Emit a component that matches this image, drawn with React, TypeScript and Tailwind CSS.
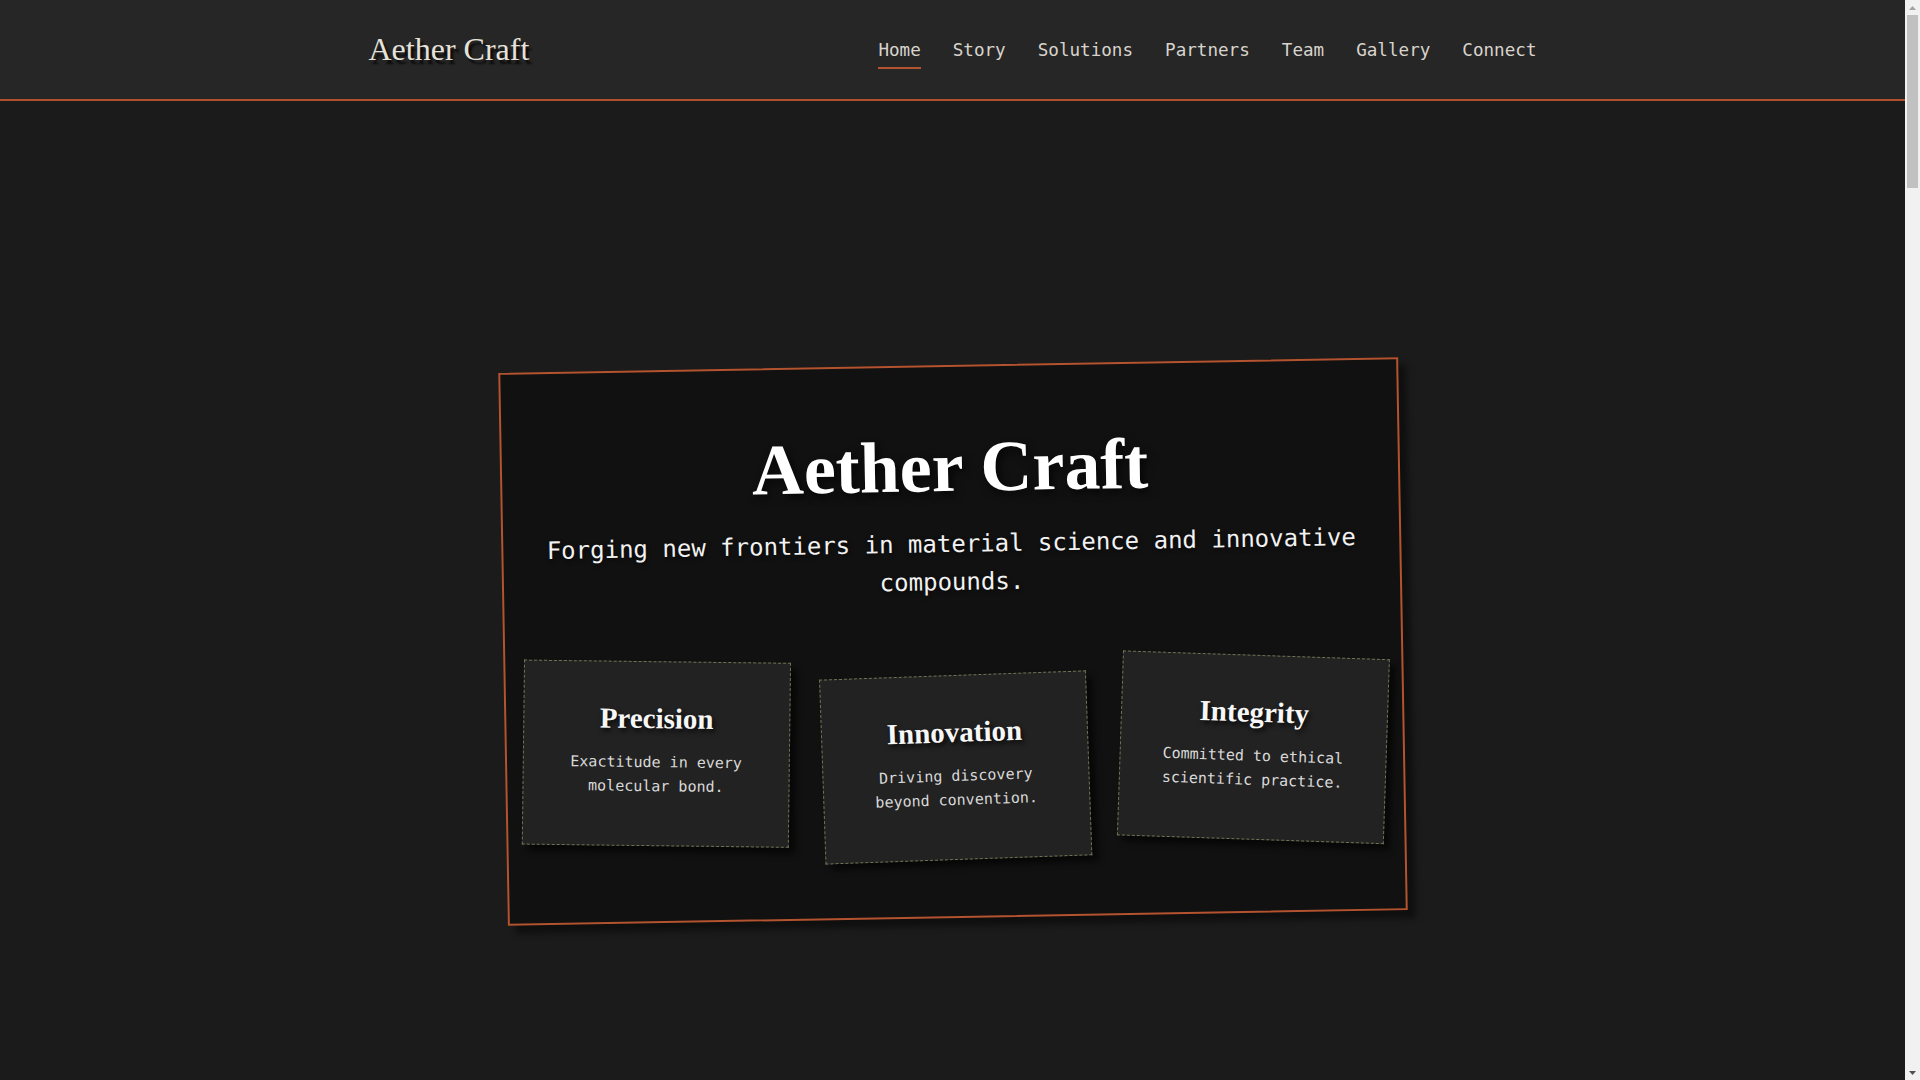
import React from 'react';

const serif = "font-['Liberation_Serif',_'Times_New_Roman',_serif]";
const mono = "font-['DejaVu_Sans_Mono',_'Liberation_Mono',_monospace]";

const navLinks = ['Home', 'Story', 'Solutions', 'Partners', 'Team', 'Gallery', 'Connect'];

const features = [
  { title: 'Precision', text: 'Exactitude in every molecular bond.', tilt: 'rotate-[1.7deg]' },
  { title: 'Innovation', text: 'Driving discovery beyond convention.', tilt: 'rotate-[-1deg] translate-y-[19px]' },
  { title: 'Integrity', text: 'Committed to ethical scientific practice.', tilt: 'rotate-[2.9deg] translate-y-[4px]' },
];

const Header: React.FC = () => (
  <header className="h-[101px] border-b-2 border-[#b0502c] bg-[#262626]">
    <div className="mx-auto flex h-full max-w-[1200px] items-center justify-between px-4">
      <a
        href="#home"
        className={`${serif} -mt-[2px] text-[32px] leading-none text-[#e6e2da] [text-shadow:3px_4px_2px_rgba(0,0,0,0.75)]`}
      >
        Aether Craft
      </a>
      <nav className={`${mono} mt-[2px] flex items-center gap-8 text-[17.6px] leading-[1.5] text-[#d8d4cd]`}>
        {navLinks.map((link, i) => (
          <a key={link} href={`#${link.toLowerCase()}`} className="relative">
            {link}
            {i === 0 && (
              <span className="absolute left-0 right-0 -bottom-[5px] h-[2px] bg-[#b4532f]" />
            )}
          </a>
        ))}
      </nav>
    </div>
  </header>
);

const Hero: React.FC = () => (
  <section id="home" className="flex min-h-screen items-center justify-center">
    <div className="w-[900px] -rotate-1 border-2 border-[#b4532f] bg-[#111111] px-4 pt-[57px] pb-[75px] text-center shadow-[8px_8px_6px_rgba(0,0,0,0.45)]">
      <h1 className={`${serif} text-[72px] font-bold leading-[1.2] text-white [text-shadow:3px_4px_8px_rgba(0,0,0,0.7)]`}>
        Aether Craft
      </h1>
      <p className={`${mono} mx-auto mt-4 max-w-[840px] text-[24px] leading-[1.55] text-[#f2f2f2] [text-shadow:1px_2px_4px_rgba(0,0,0,0.6)]`}>
        Forging new frontiers in material science and innovative compounds.
      </p>
      <div className="mt-[55px] grid grid-cols-3 gap-8">
        {features.map(f => (
          <div
            key={f.title}
            className={`${f.tilt} h-[185px] border border-dashed border-[#6a7553] bg-[#222222] px-8 pt-10 shadow-[6px_6px_6px_rgba(0,0,0,0.6)]`}
          >
            <h3 className={`${serif} text-[29px] font-bold leading-[1.15] text-[#f7f7f7] [text-shadow:2px_3px_5px_rgba(0,0,0,0.8)]`}>
              {f.title}
            </h3>
            <p className={`${mono} mt-4 text-[15px] leading-[1.55] text-[#d9d9d9]`}>{f.text}</p>
          </div>
        ))}
      </div>
    </div>
  </section>
);

// classic browser scrollbar lane, page scrolled to the top
const Scrollbar: React.FC = () => (
  <aside className="flex h-screen w-[15px] shrink-0 flex-col bg-[#f1f1f1]">
    <div className="flex h-[15px] items-center justify-center">
      <svg width="7" height="4" viewBox="0 0 7 4">
        <polygon points="3.5,0 7,4 0,4" fill="#a3a3a3" />
      </svg>
    </div>
    <div className="flex-1 px-[2px]">
      <div className="h-[173px] bg-[#c1c1c1]" />
    </div>
    <div className="flex h-[15px] items-center justify-center">
      <svg width="7" height="4" viewBox="0 0 7 4">
        <polygon points="0,0 7,0 3.5,4" fill="#505050" />
      </svg>
    </div>
  </aside>
);

export default function App() {
  return (
    <div className="flex h-screen overflow-hidden bg-[#1b1b1b]">
      <main className="min-w-0 flex-1">
        <Header />
        <Hero />
      </main>
      <Scrollbar />
    </div>
  );
}
